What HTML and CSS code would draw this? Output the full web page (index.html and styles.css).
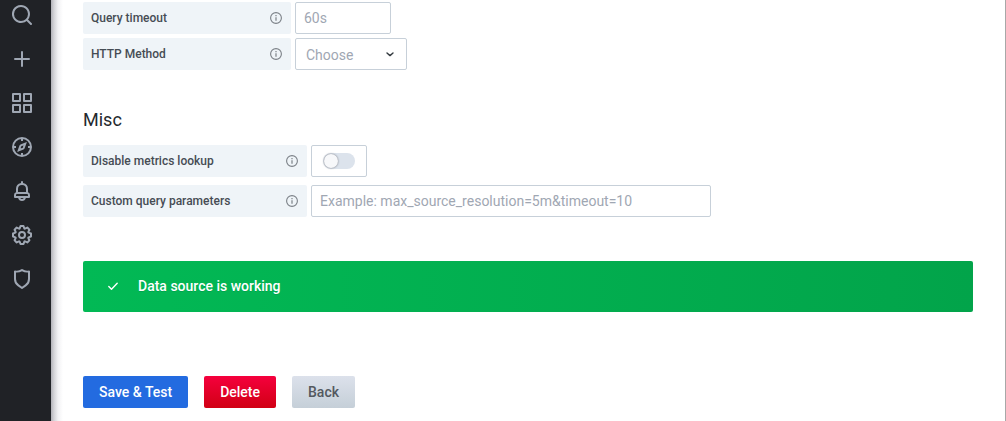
FILE: index.html
```html
<!DOCTYPE html>
<html lang="en">
<head>
<meta charset="utf-8">
<meta name="viewport" content="width=device-width, initial-scale=1">
<title>Data source settings</title>
<link rel="stylesheet" href="styles.css">
</head>
<body>
<svg class="sprite" aria-hidden="true">
  <symbol id="info" viewBox="0 0 16 16">
    <circle cx="8" cy="8" r="5.4" fill="none" stroke="currentColor" stroke-width="1.1"/>
    <path d="M7.4 7.2h1.2v3.6H7.4zM7.4 5h1.2v1.2H7.4z" fill="currentColor"/>
  </symbol>
</svg>
<div class="app">
  <nav class="sidebar" aria-label="Main">
    <a href="#search" aria-label="Search"><svg class="nav-icon" viewBox="0 0 24 24"><path d="M21.71,20.29,18,16.61A9,9,0,1,0,16.61,18l3.68,3.68a1,1,0,0,0,1.42,0A1,1,0,0,0,21.71,20.29ZM11,18a7,7,0,1,1,7-7A7,7,0,0,1,11,18Z"/></svg></a>
    <a href="#create" aria-label="Create"><svg class="nav-icon" viewBox="0 0 24 24"><path d="M19,11H13V5a1,1,0,0,0-2,0v6H5a1,1,0,0,0,0,2h6v6a1,1,0,0,0,2,0V13h6a1,1,0,0,0,0-2Z"/></svg></a>
    <a href="#dashboards" aria-label="Dashboards"><svg class="nav-icon" viewBox="0 0 24 24"><path d="M10,13H3a1,1,0,0,0-1,1v7a1,1,0,0,0,1,1h7a1,1,0,0,0,1-1V14A1,1,0,0,0,10,13ZM9,20H4V15H9ZM21,2H14a1,1,0,0,0-1,1v7a1,1,0,0,0,1,1h7a1,1,0,0,0,1-1V3A1,1,0,0,0,21,2ZM20,9H15V4h5Zm1,4H14a1,1,0,0,0-1,1v7a1,1,0,0,0,1,1h7a1,1,0,0,0,1-1V14A1,1,0,0,0,21,13Zm-1,7H15V15h5ZM10,2H3A1,1,0,0,0,2,3v7a1,1,0,0,0,1,1h7a1,1,0,0,0,1-1V3A1,1,0,0,0,10,2ZM9,9H4V4H9Z"/></svg></a>
    <a href="#explore" aria-label="Explore"><svg class="nav-icon nav-icon-line" viewBox="0 0 24 24"><circle cx="12" cy="12" r="9"/><path d="M12 3v3M12 18v3M3 12h3M18 12h3"/><path d="M15.2 8.8l-4.3 1.6a1 1 0 0 0-.5.5l-1.6 4.3 4.3-1.6a1 1 0 0 0 .5-.5z"/></svg></a>
    <a href="#alerting" aria-label="Alerting"><svg class="nav-icon" viewBox="0 0 24 24"><path d="M18,13.18V10a6,6,0,0,0-5-5.91V3a1,1,0,0,0-2,0V4.09A6,6,0,0,0,6,10v3.18A3,3,0,0,0,4,16v2a1,1,0,0,0,1,1H8.14a4,4,0,0,0,7.72,0H19a1,1,0,0,0,1-1V16A3,3,0,0,0,18,13.18ZM8,10a4,4,0,0,1,8,0v3H8Zm4,10a2,2,0,0,1-1.72-1h3.44A2,2,0,0,1,12,20Zm6-3H6V16a1,1,0,0,1,1-1H17a1,1,0,0,1,1,1Z"/></svg></a>
    <a href="#configuration" aria-label="Configuration"><svg class="nav-icon" viewBox="0 0 24 24"><path d="M21.32,9.55l-1.89-.63.89-1.78A1,1,0,0,0,20.13,6L18,3.87a1,1,0,0,0-1.15-.19l-1.78.89-.63-1.89A1,1,0,0,0,13.5,2h-3a1,1,0,0,0-.95.68L8.92,4.57,7.14,3.68A1,1,0,0,0,6,3.87L3.87,6a1,1,0,0,0-.19,1.15l.89,1.78-1.89.63A1,1,0,0,0,2,10.5v3a1,1,0,0,0,.68.95l1.89.63-.89,1.78A1,1,0,0,0,3.87,18L6,20.13a1,1,0,0,0,1.15.19l1.78-.89.63,1.89a1,1,0,0,0,.95.68h3a1,1,0,0,0,.95-.68l.63-1.89,1.78.89A1,1,0,0,0,18,20.13L20.13,18a1,1,0,0,0,.19-1.15l-.89-1.78,1.89-.63A1,1,0,0,0,22,13.5v-3A1,1,0,0,0,21.32,9.55ZM20,12.78l-1.2.4A2,2,0,0,0,17.64,16l.57,1.14-1.1,1.1L16,17.64a2,2,0,0,0-2.79,1.16l-.4,1.2H11.22l-.4-1.2A2,2,0,0,0,8,17.64l-1.14.57-1.1-1.1L6.36,16A2,2,0,0,0,5.2,13.18L4,12.78V11.22l1.2-.4A2,2,0,0,0,6.36,8L5.79,6.89l1.1-1.1L8,6.36A2,2,0,0,0,10.82,5.2l.4-1.2h1.56l.4,1.2A2,2,0,0,0,16,6.36l1.14-.57,1.1,1.1L17.64,8a2,2,0,0,0,1.16,2.79l1.2.4ZM12,8a4,4,0,1,0,4,4A4,4,0,0,0,12,8Zm0,6a2,2,0,1,1,2-2A2,2,0,0,1,12,14Z"/></svg></a>
    <a href="#admin" aria-label="Server admin"><svg class="nav-icon" viewBox="0 0 24 24"><path d="M19.63,3.65a1,1,0,0,0-.84-.2,8,8,0,0,1-6.22-1.27,1,1,0,0,0-1.14,0A8,8,0,0,1,5.21,3.45a1,1,0,0,0-.84.2A1,1,0,0,0,4,4.43v7.45a9,9,0,0,0,3.77,7.33l3.65,2.6a1,1,0,0,0,1.16,0l3.65-2.6A9,9,0,0,0,20,11.88V4.43A1,1,0,0,0,19.63,3.65ZM18,11.88a7,7,0,0,1-2.93,5.7L12,19.77,8.93,17.58A7,7,0,0,1,6,11.88V5.58a10,10,0,0,0,6-1.39,10,10,0,0,0,6,1.39Z"/></svg></a>
  </nav>
  <main class="content">
    <form>
      <div class="group group-tight">
        <div class="row">
          <label class="label" for="timeout">Query timeout<svg class="info"><use href="#info"/></svg></label>
          <input class="field field-short" id="timeout" type="text" placeholder="60s">
        </div>
        <div class="row">
          <label class="label" for="method">HTTP Method<svg class="info"><use href="#info"/></svg></label>
          <div class="select-wrap">
            <select class="field select" id="method">
              <option value="">Choose</option>
              <option>GET</option>
              <option>POST</option>
            </select>
            <svg class="chevron" viewBox="0 0 16 16"><path d="M5 7l3 2.6L11 7"/></svg>
          </div>
        </div>
      </div>
      <h3 class="heading">Misc</h3>
      <div class="group">
        <div class="row">
          <label class="label label-wide" for="lookup">Disable metrics lookup<svg class="info"><use href="#info"/></svg></label>
          <div class="switch-box"><input class="switch" id="lookup" type="checkbox" role="switch"></div>
        </div>
        <div class="row">
          <label class="label label-wide" for="params">Custom query parameters<svg class="info"><use href="#info"/></svg></label>
          <input class="field field-long" id="params" type="text" placeholder="Example: max_source_resolution=5m&amp;timeout=10">
        </div>
      </div>
      <div class="alert" role="status">
        <svg class="check" viewBox="0 0 16 16"><path d="M3.8 8.5l2.7 2.7 5.7-5.9"/></svg>
        <span>Data source is working</span>
      </div>
      <div class="actions">
        <button class="btn btn-primary" type="submit">Save &amp; Test</button>
        <button class="btn btn-danger" type="button">Delete</button>
        <button class="btn btn-secondary" type="button">Back</button>
      </div>
    </form>
  </main>
</div>
</body>
</html>
```

FILE: styles.css
```css
* {
  box-sizing: border-box;
}

body {
  margin: 0;
  background: #fff;
  color: #464c54;
  font-family: Roboto, "Liberation Sans", sans-serif;
  font-size: 14px;
  line-height: 20px;
}

.sprite {
  display: none;
}

.app {
  display: flex;
  min-height: 100vh;
  border-right: 1px solid #a8a8a8;
}

.sidebar {
  display: flex;
  flex: none;
  flex-direction: column;
  gap: 20px;
  width: 51px;
  padding: 3px 10px;
  background: #202226;
}

.nav-icon {
  display: block;
  width: 24px;
  height: 24px;
  fill: #9fa7b3;
}

.nav-icon-line {
  fill: none;
  stroke: #9fa7b3;
  stroke-width: 2;
}

.content {
  flex: 1;
  min-width: 0;
  padding: 2px 32px 12px;
  background: linear-gradient(90deg, #b2b2b8, #d4d4d8 3px, #f2f2f4 7px, #fff 12px);
}

.group {
  display: flex;
  flex-direction: column;
  gap: 8px;
}

.group-tight {
  gap: 4px;
}

.row {
  display: flex;
  gap: 4px;
}

.label {
  display: flex;
  flex: none;
  align-items: center;
  justify-content: space-between;
  width: 208px;
  height: 32px;
  padding: 0 7px 0 8px;
  border-radius: 2px;
  background: #eff4f8;
  color: #464c54;
  font-size: 12px;
  font-weight: 500;
}

.label-wide {
  width: 224px;
}

.info {
  width: 16px;
  height: 16px;
  color: #7b8087;
}

.field {
  height: 32px;
  padding: 0 8px;
  border: 1px solid #c7d0d9;
  border-radius: 2px;
  background: #fff;
  color: #464c54;
  font: inherit;
}

.field::placeholder {
  color: #9fa7b3;
  opacity: 1;
}

.field-short {
  width: 96px;
}

.field-long {
  width: 400px;
  min-width: 0;
}

.select-wrap {
  position: relative;
  width: 112px;
}

.select {
  width: 100%;
  padding: 2px 24px 0 10px;
  color: #9fa7b3;
  appearance: none;
}

.chevron {
  position: absolute;
  top: 8px;
  right: 9px;
  width: 16px;
  height: 16px;
  fill: none;
  stroke: #343b40;
  stroke-width: 1.4;
  stroke-linecap: round;
  stroke-linejoin: round;
  pointer-events: none;
}

.heading {
  margin: 38px 0 13px;
  color: #24292e;
  font-size: 18px;
  font-weight: 400;
  line-height: 24px;
}

.switch-box {
  display: flex;
  align-items: center;
  justify-content: center;
  width: 56px;
  height: 32px;
  border: 1px solid #c7d0d9;
  border-radius: 2px;
}

.switch {
  display: flex;
  align-items: center;
  width: 32px;
  height: 16px;
  margin: 0;
  padding: 0 1px;
  border-radius: 8px;
  background: #dce3ec;
  appearance: none;
}

.switch::before {
  width: 14px;
  height: 14px;
  border-radius: 50%;
  background: #f7f8fa;
  box-shadow: 0 0 2px rgba(31, 31, 40, 0.6);
  content: "";
}

.switch:checked {
  justify-content: flex-end;
  background: #1f62e0;
}

.alert {
  display: flex;
  align-items: center;
  gap: 17px;
  min-height: 51px;
  margin-top: 44px;
  padding: 15px 22px 16px;
  border-radius: 2px;
  background: linear-gradient(90deg, #02b955, #02a44a);
  color: #fff;
  font-weight: 500;
  text-shadow: 0 1px 0 rgba(0, 0, 0, 0.1);
}

.check {
  width: 16px;
  height: 16px;
  fill: none;
  stroke: #fff;
  stroke-width: 1.4;
  stroke-linecap: round;
  stroke-linejoin: round;
}

.actions {
  display: flex;
  gap: 16px;
  margin-top: 64px;
}

.btn {
  height: 32px;
  padding: 0 16px;
  border: 0;
  border-radius: 2px;
  color: #fff;
  font: inherit;
  font-weight: 500;
}

.btn-primary {
  background: #236be0;
}

.btn-danger {
  background: linear-gradient(#f5003d, #d10014);
}

.btn-secondary {
  background: linear-gradient(#dce1eb, #c5cfd8);
  color: #54595f;
}
```
